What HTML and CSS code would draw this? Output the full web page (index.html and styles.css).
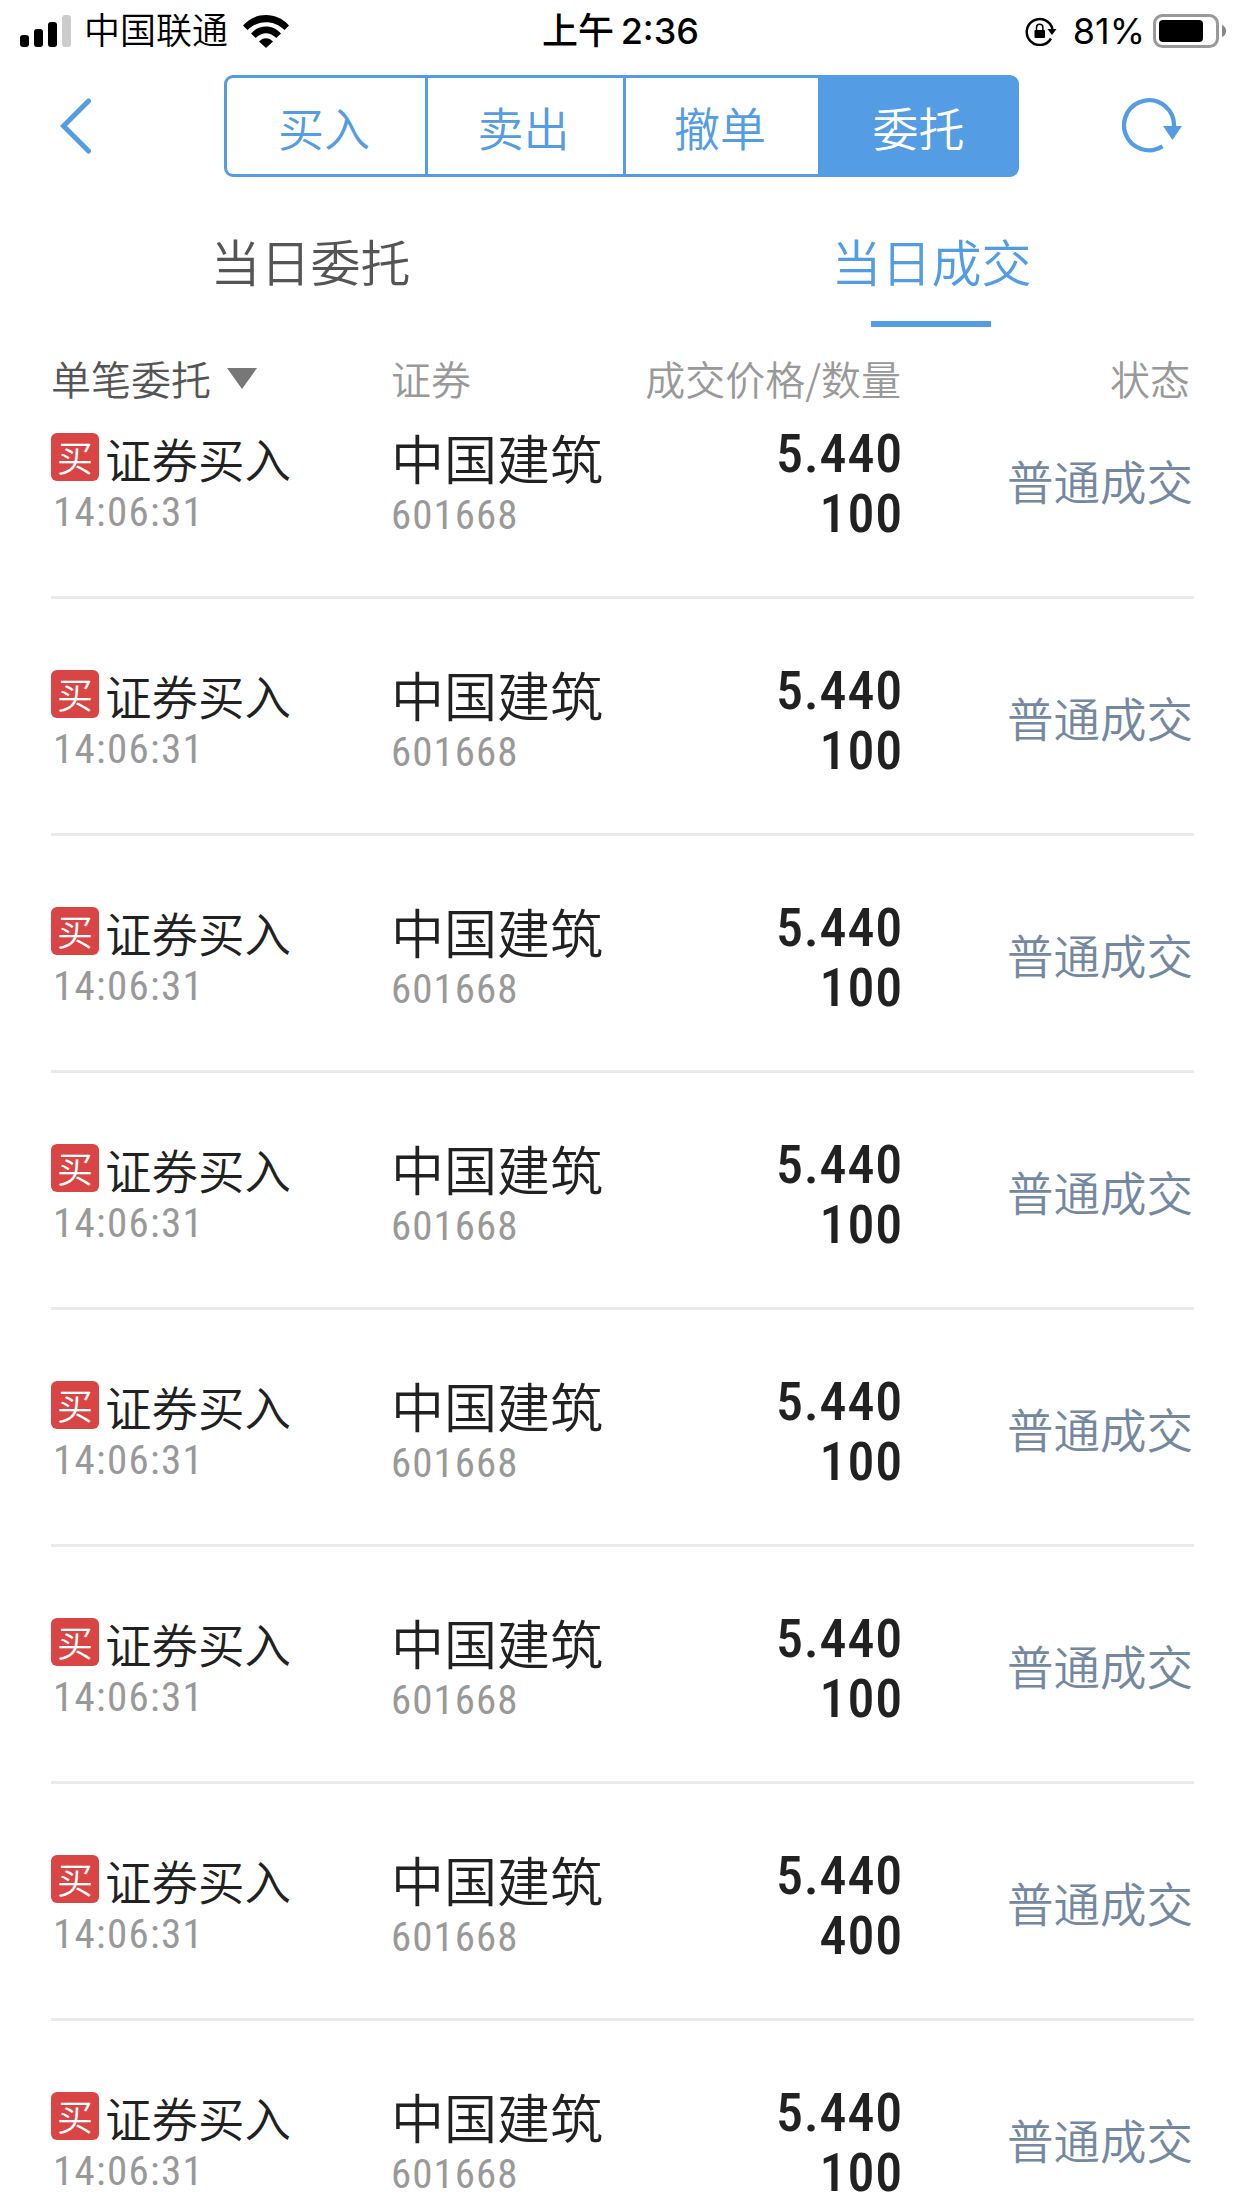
FILE: index.html
```html
<!DOCTYPE html>
<html lang="zh-CN">
<head>
  <meta charset="UTF-8">
  <meta name="viewport" content="width=device-width, initial-scale=1.0">
  <title>当日成交</title>
  <link rel="stylesheet" href="styles.css">
</head>
<body>
  <div class="statusbar">
    <div class="status-left">
      <svg class="signal" width="51" height="32" viewBox="0 0 51 32">
        <rect x="0" y="20" width="9" height="12" rx="3"/>
        <rect x="14" y="14" width="9" height="18" rx="3"/>
        <rect x="28" y="7" width="9" height="25" rx="3"/>
        <rect x="42" y="0" width="9" height="32" rx="3" fill="#ccc"/>
      </svg>
      <span class="carrier">中国联通</span>
      <svg class="wifi" width="46" height="33" viewBox="0 0 46 33">
        <path d="M0 10.500C12-3.500 34-3.500 46 10.500L41.500 15C31 4.500 15 4.500 4.500 15Z"/>
        <path d="M8 18.500C16 9 30 9 38 18.500L33.300 23C27 16.500 19 16.500 12.700 23Z"/>
        <path d="M16 26.500C20 22 26 22 30 26.500L23 33Z"/>
      </svg>
    </div>
    <div class="clock">上午 <b>2:36</b></div>
    <div class="status-right">
      <svg class="lock" width="32" height="29" viewBox="0 0 32 29">
        <path d="M26 21.500A13 13 0 1 1 27.400 12" fill="none" stroke="#000" stroke-width="2.500"/>
        <path d="M22.500 12H31.500L27 18Z"/>
        <rect x="9.500" y="13" width="10.500" height="8" rx="1"/>
        <path d="M11.500 13V10.500a3.200 3.200 0 0 1 6.400 0V13" fill="none" stroke="#000" stroke-width="1.500"/>
      </svg>
      <span class="percent">81%</span>
      <svg class="battery" width="74" height="34" viewBox="0 0 74 34">
        <rect x="1.500" y="1.500" width="63" height="31" rx="8" fill="none" stroke="#999" stroke-width="3"/>
        <rect x="6" y="6" width="44" height="22" rx="4"/>
        <path d="M69 11C74.500 13 74.500 21 69 23Z" fill="#888"/>
      </svg>
    </div>
  </div>

  <div class="navbar">
    <svg class="back" width="32" height="56" viewBox="0 0 32 56">
      <path d="M28.500 3L3.500 28L28.500 53" fill="none" stroke="#549ce3" stroke-width="5" stroke-linecap="round"/>
    </svg>
    <div class="segment">
      <div class="seg">买入</div>
      <div class="seg">卖出</div>
      <div class="seg last">撤单</div>
      <div class="seg active">委托</div>
    </div>
    <svg class="refresh" width="61" height="56" viewBox="0 0 61 56">
      <path d="M40.500 48.300A25 25 0 1 1 52 28" fill="none" stroke="#549ce3" stroke-width="4.300"/>
      <path d="M41 28H60L50.500 42Z" fill="#549ce3"/>
    </svg>
  </div>

  <div class="tabs">
    <div class="tab">当日委托</div>
    <div class="tab active">当日成交</div>
  </div>

  <div class="list-head">
    <div class="filter">单笔委托 <i class="arrow"></i></div>
    <div>证券</div>
    <div class="right">成交价格/数量</div>
    <div class="right status">状态</div>
  </div>

  <div class="list" id="list"></div>

  <script>
    const time = '14:06:31';
    const amounts = [100, 100, 100, 100, 100, 100, 400, 100];

    document.getElementById('list').innerHTML = amounts.map(n => `
      <div class="row">
        <div class="type">
          <div class="type-name"><span class="badge">买</span>证券买入</div>
          <div class="time">${time}</div>
        </div>
        <div class="stock">
          <div class="stock-name">中国建筑</div>
          <div class="code">601668</div>
        </div>
        <div class="deal">
          <div>5.440</div>
          <div>${n}</div>
        </div>
        <div class="state">普通成交</div>
      </div>
    `).join('');
  </script>
</body>
</html>
```

FILE: styles.css
```css
* {
  box-sizing: border-box;
}

body {
  margin: 0;
  height: 2208px;
  overflow: hidden;
  background: #fff;
  color: #212121;
  font-family: "Noto Sans CJK SC", sans-serif;
  font-weight: 350;
}

svg {
  display: block;
  flex: none;
}

/* status bar */
.statusbar {
  display: grid;
  grid-template-columns: 1fr auto 1fr;
  align-items: center;
  height: 60px;
  padding: 0 15px 0 20px;
  color: #000;
  font-family: Inter, "Noto Sans CJK SC", sans-serif;
  font-size: 36px;
  line-height: 62px;
}

.status-left, .status-right {
  display: flex;
  align-items: center;
}

.status-right {
  justify-content: flex-end;
}

.carrier {
  margin: 0 15px 0 13px;
}

.clock {
  margin-left: -6px;
  font-weight: 500;
  word-spacing: -3px;
}

.clock b {
  font-weight: 500;
}

.percent {
  margin: 0 8px 0 16px;
  font-weight: 400;
}

/* nav */
.navbar {
  display: flex;
  align-items: center;
  height: 132px;
  padding: 0 60px;
}

.segment {
  flex: none;
  display: grid;
  grid-template-columns: 201px 198px 192px 198px;
  width: 795px;
  height: 102px;
  margin-left: 132px;
  border: 3px solid #549ce3;
  border-radius: 9px;
  background: #549ce3;
  overflow: hidden;
}

.seg {
  padding-right: 4px;
  border-right: 3px solid #549ce3;
  background: #fff;
  color: #549ce3;
  font-size: 46px;
  line-height: 96px;
  text-align: center;
}

.seg.last {
  border: 0;
}

.seg.active {
  padding-left: 3px;
  padding-right: 0;
  border: 0;
  background: #549ce3;
  color: #fff;
}

.refresh {
  margin-left: 103px;
}

/* tabs */
.tabs {
  display: grid;
  grid-template-columns: 1fr 1fr;
  height: 135px;
}

.tab {
  display: flex;
  flex-direction: column;
  align-items: center;
  color: #555;
  font-size: 50px;
  line-height: 136px;
}

.tab.active {
  color: #549ce3;
}

.tab.active::after {
  content: "";
  width: 120px;
  height: 6px;
  margin: -7px 1px 0 0;
  background: #549ce3;
}

/* list */
.list-head, .row {
  display: grid;
  grid-template-columns: 340px 249px 262px 292px;
  margin: 0 48px 0 51px;
}

.list-head {
  height: 93px;
  color: #999;
  font-size: 40px;
  line-height: 103px;
}

.filter {
  display: flex;
  align-items: center;
  height: 103px;
  color: #555;
}

.arrow {
  margin-left: 16px;
  border: 15px solid transparent;
  border-top: 21px solid #777;
  border-bottom: 0;
}

.right {
  padding-right: 1px;
  text-align: right;
}

.right.status {
  padding-right: 4px;
}

.row {
  height: 237px;
  padding-top: 69px;
  border-bottom: 3px solid #eaeaea;
}

/* the first row is partly scrolled under the header */
.row:first-child {
  height: 179px;
  padding-top: 11px;
}

.type-name {
  display: flex;
  align-items: center;
  height: 52px;
  font-size: 46.500px;
}

.badge {
  width: 48px;
  height: 48px;
  margin-right: 6px;
  border-radius: 6px;
  background: #d94545;
  color: #fff;
  font-size: 36px;
  line-height: 46px;
  text-align: center;
}

.time, .code {
  color: #999;
  font-family: "Roboto Condensed", Roboto, sans-serif;
  font-size: 41px;
  font-weight: 400;
  line-height: 50px;
  letter-spacing: 1px;
}

.time {
  padding: 4px 0 0 2px;
  letter-spacing: 1.3px;
}

.stock-name {
  height: 59px;
  font-size: 53px;
  line-height: 52px;
}

.deal {
  margin: -7px -1px 0 0;
  font-family: "Roboto Condensed", Roboto, sans-serif;
  font-size: 54px;
  font-weight: 500;
  line-height: 60px;
  letter-spacing: 0.8px;
  text-align: right;
}

.state {
  padding-right: 1px;
  color: #7488a1;
  font-size: 46.500px;
  line-height: 97px;
  text-align: right;
}
```
